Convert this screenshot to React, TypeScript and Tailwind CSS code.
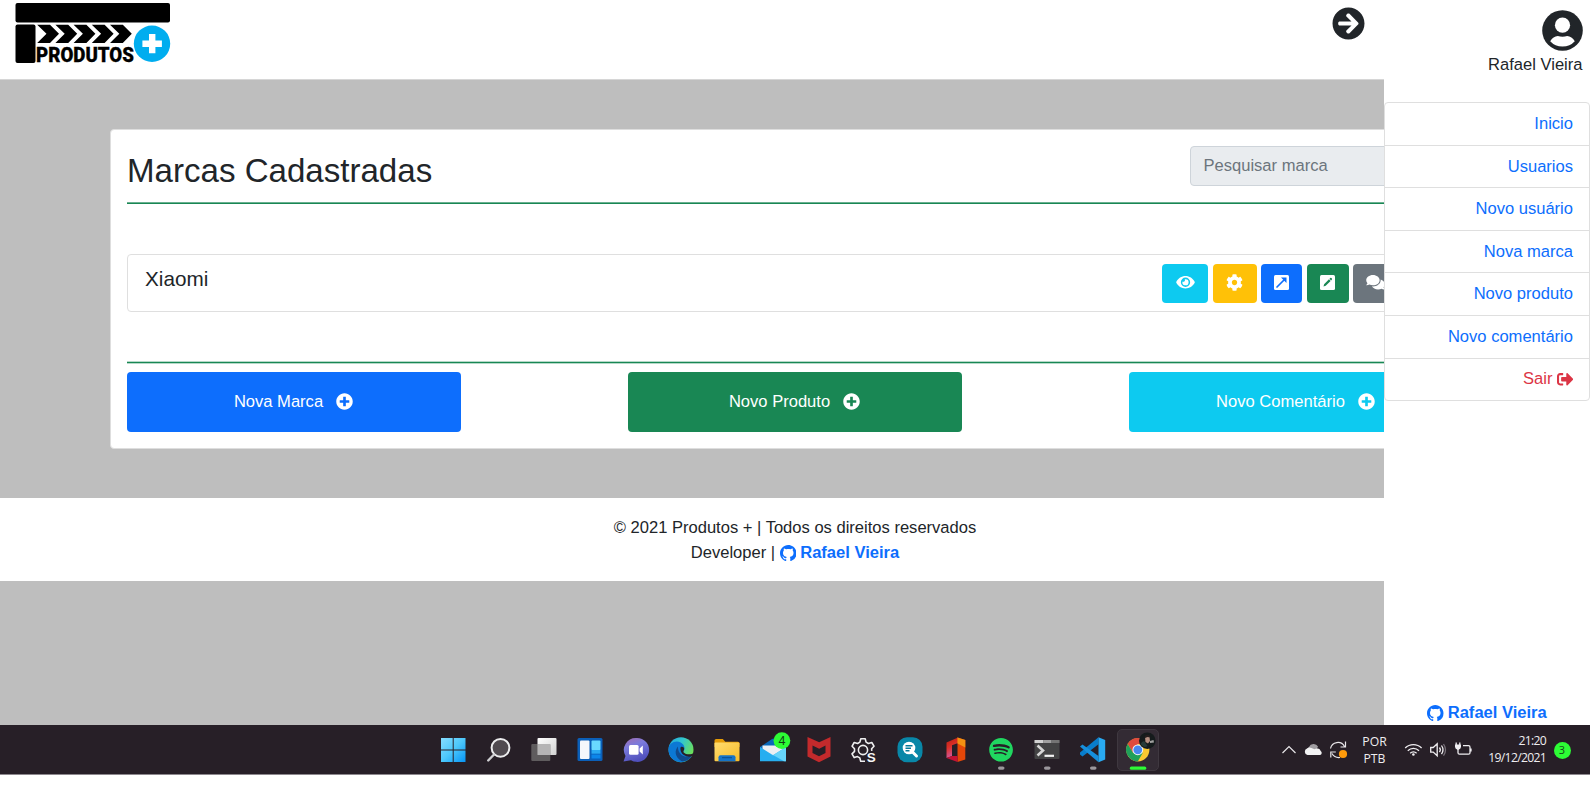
import type { ReactNode } from "react";
import { BsGithub } from "react-icons/bs";
import {
  FaArrowCircleRight,
  FaCog,
  FaComments,
  FaEye,
  FaPlusCircle,
  FaSignOutAlt,
  FaSpotify,
} from "react-icons/fa";

function Logo() {
  return (
    <svg className="ml-[15px] mt-[2px] h-[66px] w-[156px] overflow-visible" viewBox="15 2 156 66">
      <rect x="15.5" y="3" width="154.5" height="19.5" rx="2" />
      <rect x="15.5" y="24.5" width="20" height="38.5" rx="2" />
      {[0, 1, 2, 3, 4].map((i) => (
        <path
          key={i}
          transform={`translate(${i * 18.2} 0)`}
          d="M37.2 24.8H50L59 33.8L50 43H37.2L46.5 33.8Z"
        />
      ))}
      <text
        x="36"
        y="62.300"
        textLength="98"
        lengthAdjust="spacingAndGlyphs"
        fontFamily="Roboto, sans-serif"
        fontWeight="900"
        fontSize="21"
        stroke="#000"
        strokeWidth=".3"
      >
        PRODUTOS
      </text>
      <circle cx="152" cy="43.700" r="18.200" fill="#00adef" />
      <path d="M149 34h6.400v6.500h6.500v6.400h-6.500v6.300h-6.400v-6.300h-6.600v-6.400h6.600z" fill="#fff" />
    </svg>
  );
}

function OpenIcon() {
  return (
    <svg viewBox="0 0 15 15" className="size-[15px]">
      <rect width="15" height="15" rx="1.500" fill="#fff" />
      <path d="M3 12L11 4" stroke="#0d6efd" strokeWidth="1.700" strokeLinecap="round" />
      <path d="M7 2.500h5.500V8z" fill="#0d6efd" />
    </svg>
  );
}

function EditIcon() {
  return (
    <svg viewBox="0 0 15 15" className="size-[15px]">
      <rect width="15" height="15" rx="1.500" fill="#fff" />
      <path d="M3.500 11.500l.6-2.300 4.900-4.900 1.600 1.600-4.900 4.900zM9.500 3.800l.8-.8q.5-.4 1 0l.6.600q.4.500 0 1l-.8.800z" fill="#198754" />
    </svg>
  );
}

function Avatar() {
  return (
    <svg viewBox="0 0 41 41" className="size-[41px]">
      <circle cx="20.500" cy="20.500" r="20.300" fill="#212529" />
      <circle cx="20.500" cy="15.200" r="7.600" fill="#fff" />
      <path d="M8.200 31.300q3-5 7.600-5.300 4.700 1.300 9.400 0 4.600.3 7.600 5.300-4.800 5.300-12.300 5.300t-12.300-5.300z" fill="#fff" />
    </svg>
  );
}

const actions = [
  { icon: <FaEye className="h-[16.5px] w-[19px]" />, box: "w-[46px] bg-[#0dcaf0]" },
  { icon: <FaCog className="size-[17px]" />, box: "w-[44px] bg-[#ffc107]" },
  { icon: <OpenIcon />, box: "w-[41px] bg-[#0d6efd]" },
  { icon: <EditIcon />, box: "w-[42px] bg-[#198754]" },
  { icon: <FaComments className="h-[16.5px] w-[19px]" />, box: "w-[45px] bg-[#6c757d]" },
];

const shortcuts = [
  { label: "Nova Marca", color: "bg-[#0d6efd]" },
  { label: "Novo Produto", color: "bg-[#198754]" },
  { label: "Novo Comentário", color: "bg-[#0dcaf0]" },
];

const menu = ["Inicio", "Usuarios", "Novo usuário", "Nova marca", "Novo produto", "Novo comentário"];

function GithubLink() {
  return (
    <span className="inline-flex items-center font-bold text-[#0d6efd]">
      <BsGithub className="mb-px mr-[4px] size-[16.5px]" />
      Rafael Vieira
    </span>
  );
}

function BrandCard() {
  return (
    <section className="ml-[110px] mt-[49px] h-[320px] w-[1370px] rounded-[4px] border border-[#dedede] bg-white px-[16px] pt-[16px]">
      <div className="flex h-[56px] justify-between">
        <h1 className="mt-[5px] text-[33.1px] leading-[40px]">Marcas Cadastradas</h1>
        <div className="flex h-[40px] w-[273px] items-center rounded-[4px] border border-[#ced4da] bg-[#e9ecef] px-[12.5px] text-[#6c757d]">
          Pesquisar marca
        </div>
      </div>
      <div className="h-[2px] border-t border-[#6bb090] bg-[#198754]" />
      <div className="mt-[50px] flex h-[58px] justify-between rounded-[4px] border border-[#dfdfdf] px-[17px] pt-[8px]">
        <h2 className="mt-[3px] text-[20.7px] leading-[25px]">Xiaomi</h2>
        <div className="flex w-[283px] gap-[4.600px] pt-px">
          {actions.map((a, i) => (
            <span
              key={i}
              className={`flex h-[39px] shrink-0 items-center justify-center rounded-[4px] pb-[2px] text-white ${a.box}`}
            >
              {a.icon}
            </span>
          ))}
        </div>
      </div>
      <div className="mt-[49px] h-[3px] border-y border-[#b5d9c8] bg-[#198754]" />
      <div className="mt-[8px] flex justify-between">
        {shortcuts.map((s) => (
          <button
            key={s.label}
            className={`flex h-[60px] w-[334px] items-center justify-center gap-[13px] rounded-[4px] pr-px pt-px text-white ${s.color}`}
          >
            {s.label}
            <FaPlusCircle className="mb-[2px] size-[17px]" />
          </button>
        ))}
      </div>
    </section>
  );
}

function Sidebar() {
  return (
    <aside className="flex w-[206px] flex-col bg-white">
      <div className="flex h-[102px] flex-col items-end pr-[7.500px] pt-[9.500px]">
        <Avatar />
        <span className="mt-[2.500px]">Rafael Vieira</span>
      </div>
      <ul className="rounded-[4px] border border-[#dfdfdf] text-right">
        {menu.map((m) => (
          <li key={m} className="h-[42.6px] border-b border-[#dfdfdf] pr-[16px] leading-[41.6px] text-[#0d6efd]">
            {m}
          </li>
        ))}
        <li className="flex h-[41.600px] items-center justify-end gap-[4px] pr-[16px] text-[#dc3545]">
          Sair <FaSignOutAlt className="size-[16.5px]" />
        </li>
      </ul>
      <div className="mt-auto flex h-[23.500px] justify-center">
        <GithubLink />
      </div>
    </aside>
  );
}

function Dot() {
  return <rect x="20" y="41.5" width="6.500" height="3.200" rx="1.600" fill="#9b979c" />;
}

const apps: ReactNode[] = [
  <g fill="url(#win)">
    <path d="M11 13h11.700v11.600H11zM23.700 13h11.800v11.600H23.700zM11 25.500h11.700v11.600H11zM23.700 25.500h11.800v11.600H23.700z" />
  </g>,
  <g>
    <circle cx="24.500" cy="22.800" r="8.900" fill="#504a50" stroke="#ececee" strokeWidth="2" />
    <path d="M18 29.500l-5.800 6" stroke="#cfcfd2" strokeWidth="2.400" strokeLinecap="round" />
  </g>,
  <g>
    <rect x="16.500" y="13" width="19" height="17" rx="1" fill="url(#pane)" />
    <rect x="10.300" y="19" width="19" height="17" rx="1" fill="#666365" fillOpacity=".9" />
    <path d="M16.500 19h12.800v11H16.500z" fill="#b5b4b5" />
  </g>,
  <g>
    <rect x="10.500" y="13" width="25" height="23" rx="1.500" fill="#0b5fb8" />
    <rect x="13" y="15.500" width="9.500" height="18.500" rx="1" fill="#f4f7fb" />
    <rect x="24.500" y="15.500" width="9" height="9.800" rx="1" fill="#69d9ff" />
    <path d="M24.500 25h9v3.700h-9z" fill="#28a9f2" />
    <path d="M24.500 29.500h9v4h-9z" fill="#0b86ea" />
  </g>,
  <g>
    <path d="M23.500 12.900a12 12 0 1 1-5.500 22.300L10.500 36.500l2-5.600A12 12 0 0 1 23.500 12.900z" fill="url(#chat)" />
    <rect x="16" y="20" width="9.600" height="9.800" rx="1.500" fill="#fff" />
    <path d="M26.600 23.500l3.200-3v9l-3.200-3z" fill="#fff" />
  </g>,
  <g>
    <circle cx="23" cy="24.700" r="12.500" fill="url(#edge)" />
    <path d="M10.500 24c.4-6 7-9 12.200-6.500 3 1.500 4.500 4.600 3.500 7.500-.7 1.600-2.300 3 .8 4.300 3 1.200 6.500.4 7.800-.6-2 5-6.800 8.700-12.300 8.500-7-.3-12.300-6-12-13.200z" fill="#0c78d4" />
    <path d="M20 21.500c-3.500 3.500-3.500 10.500 3.300 14.500 4.500 1 8.700-1.500 11-6-4 2.500-9.500 2.200-12.200-1.500-1.800-2.400-2.200-4.800-2.100-7z" fill="#104a8e" />
    <path d="M22.400 23c.2-2 3.900-1.500 3.800.9-.1 1.700-1.500 2-.5 3.600 2 2 6 2.500 9.300 1l.8 0-1 2.500q-5 2-9-1-3.600-2.500-3.400-7z" fill="#271f27" />
  </g>,
  <g>
    <path d="M10.500 15.500q0-1.600 1.600-1.600h6.700l2.500 2.800h12.600q1.600 0 1.600 1.600V22h-25z" fill="#e59b06" />
    <rect x="10.500" y="17.500" width="25" height="18.700" rx="1" fill="url(#folder)" />
    <path d="M14.500 36.200v-4q0-2 2-2h13q2 0 2 2v4z" fill="#1674c7" />
    <path d="M18 32.700h10" stroke="#0a4d8e" strokeWidth="1" />
  </g>,
  <g>
    <path d="M10 22l12-8q1.500-1 3 0l11 8v4H10z" fill="#0968b9" />
    <path d="M12.500 20.500h21v12h-21z" fill="#eceff3" />
    <path d="M10 22l13 8.200L36 22v14.200H10z" fill="#27aef0" />
    <path d="M36 22v14.200H34L19 27.700 23 30.200z" fill="#67d4fa" />
    <circle cx="31.900" cy="15.600" r="8.400" fill="#2dfc35" />
    <text x="31.900" y="19.900" textAnchor="middle" fontSize="12" fill="#123b14" fontFamily="Noto Sans, sans-serif">4</text>
  </g>,
  <g>
    <path d="M11.500 12l11.700 5.300L34.500 12v19.500L23 37.200l-11.500-5.700z" fill="#c42a2c" />
    <path d="M16.500 20.500l6.700 3.200 6.300-3.200V28L23 31.300 16.500 28z" fill="#271f27" />
  </g>,
  <g fill="none" stroke="#eeeeef" strokeWidth="1.600" strokeLinejoin="round">
    <path d="M24 36.300h-4.300l-.9-3.400-2.300-1.300-3.300 1-2.200-3.700 2.500-2.500v-2.700l-2.400-2.500 2.100-3.700 3.400 1 2.300-1.400.9-3.400h4.400l.9 3.400 2.300 1.400 3.400-1 2.200 3.700-2.400 2.500.2 2.200" />
    <circle cx="22" cy="25" r="4.600" />
    <text x="25.700" y="36.800" stroke="none" fill="#f5f5f6" fontWeight="700" fontSize="13.500" fontFamily="Liberation Sans, sans-serif">S</text>
  </g>,
  <g>
    <rect x="10.500" y="12.200" width="25" height="25" rx="9.500" fill="#0987a8" />
    <circle cx="22" cy="23" r="6.300" fill="#fff" />
    <path d="M26 27.500l3.500 3.500" stroke="#fff" strokeWidth="3" strokeLinecap="round" />
    <path d="M18.500 20.700h7M18.500 23.200h5.500M18.500 25.700h4" stroke="#087a9a" strokeWidth="1.500" />
  </g>,
  <g>
    <path d="M13.500 17.500L25 12.500v5.500l-6 2.300v10.700L13.500 33z" fill="url(#office)" />
    <path d="M24.500 12.500l7.800 2.400v19.600l-7.800 2.600z" fill="#e44708" />
    <path d="M24.500 12.500l7.800 2.400v7.600l-7.800-4z" fill="#f39112" />
    <path d="M13.500 33L19 31h5.500v6z" fill="#c51235" />
  </g>,
  <g>
    <FaSpotify x="10.800" y="12.500" size="24.500" color="#20d760" />
    <Dot />
  </g>,
  <g>
    <rect x="10.500" y="15" width="25" height="19" rx="1" fill="#434344" />
    <path d="M10.500 15h9v3h-9z" fill="#d1d1d1" />
    <path d="M19.500 15h8v3h-8z" fill="#a0a0a0" />
    <path d="M27.500 15h8v3h-8z" fill="#747474" />
    <path d="M13.500 20.500l5.500 5-5.500 5" fill="none" stroke="#d6d6d6" strokeWidth="2.600" />
    <path d="M20.500 30.800h9.500" stroke="#f2f2f2" strokeWidth="2.200" />
    <Dot />
  </g>,
  <g>
    <path d="M28.500 12.300v7L12.500 31.500 10 29.500v-2z" fill="#087dcc" />
    <path d="M10 21.500l2.500-2 16 11.500v6.200z" fill="#168fdc" />
    <path d="M28.500 12.300l6.700 2.800v19.300l-6.700 2.800z" fill="#29aaf2" />
    <Dot />
  </g>,
  <g>
    <rect x="2.500" y="4.500" width="41" height="41" rx="4.500" fill="#332b34" stroke="#3f3840" />
    <circle cx="22.800" cy="24.800" r="11.600" fill="#fbc831" />
    <path d="M12.700 19a11.600 11.600 0 0 1 20.200 0H22.800l-5 8.700z" fill="#df4b3d" />
    <path d="M12.700 19a11.600 11.600 0 0 0 10.100 17.400l5-8.700-10-.1z" fill="#1fa05a" />
    <circle cx="22.800" cy="24.800" r="5.400" fill="#f5f5f5" />
    <circle cx="22.800" cy="24.800" r="4.400" fill="#4787ef" />
    <circle cx="32.300" cy="15.700" r="8.300" fill="#151b1c" />
    <path d="M25.500 19q2-3.500 4-2.500l3 4.500q-4 2.500-7-2z" fill="#263a38" />
    <path d="M30 12q2-2.500 4.500-.5l.5 4.500-2 2.500-2.500-1.500z" fill="#b58f82" />
    <path d="M29.500 12q1.500-3.500 5-1.500l1 2-3-.5-2.500 1z" fill="#251d1d" />
    <path d="M35 16l3.500-1 .5 2.500-4 .5z" fill="#a1a1a0" />
    <rect x="14.800" y="41.500" width="16.500" height="3.300" rx="1.600" fill="#2dfc35" />
  </g>,
];

function Taskbar() {
  return (
    <footer className="flex h-[50px] items-start border-b border-[#8d888e] bg-[#271f27] pl-[430px] font-['Open_Sans','Noto_Sans',sans-serif] text-[12.2px] leading-[16.5px] text-[#efeef0]">
      <svg className="absolute size-0">
        <defs>
          <linearGradient id="win" gradientUnits="userSpaceOnUse" x1="11" y1="13" x2="35" y2="37">
            <stop stopColor="#87ddff" />
            <stop offset=".5" stopColor="#4dc8fb" />
            <stop offset="1" stopColor="#0795f5" />
          </linearGradient>
          <linearGradient id="pane" x2="1" y2="1">
            <stop stopColor="#fff" />
            <stop offset="1" stopColor="#d2d2d2" />
          </linearGradient>
          <linearGradient id="chat" x2=".4" y2="1">
            <stop stopColor="#a56bad" />
            <stop offset=".4" stopColor="#7b7bdc" />
            <stop offset="1" stopColor="#5050bd" />
          </linearGradient>
          <linearGradient id="edge" x2="1" y2=".5">
            <stop stopColor="#20a7df" />
            <stop offset=".5" stopColor="#32c6cf" />
            <stop offset="1" stopColor="#6cdf5a" />
          </linearGradient>
          <linearGradient id="folder" x2="1" y2="1">
            <stop stopColor="#ffdc70" />
            <stop offset="1" stopColor="#f8bd28" />
          </linearGradient>
          <linearGradient id="office" x2=".3" y2="1">
            <stop stopColor="#b81d10" />
            <stop offset=".5" stopColor="#dc3029" />
            <stop offset="1" stopColor="#cf5aa0" />
          </linearGradient>
        </defs>
      </svg>
      <div className="grid w-[731px] shrink-0 grid-cols-16">
        {apps.map((app, i) => (
          <svg key={i} className="h-[49px] w-[46px] overflow-visible" viewBox="0 0 46 49">
            {app}
          </svg>
        ))}
      </div>
      <svg className="ml-[119px] h-[49px] w-[70px] shrink-0" viewBox="1280 725 70 49" fill="none" stroke="#e8e6e9" strokeWidth="1.200">
        <path d="M1282.500 753l6.500-6.500 6.500 6.500" />
        <path d="M1308 753a4.500 4.500 0 0 1 1-6 5 5 0 0 1 9-.5l-3 6z" fill="#a19ea2" stroke="none" />
        <path d="M1307.500 755a3.400 3.400 0 0 1-.5-6.500 4 4 0 0 1 4.500-.5l3 1.300a4 4 0 0 1 6.200 1.700 2.200 2.200 0 0 1-.7 4z" fill="#f2f2f3" stroke="none" />
        <path d="M1330.500 748.500a7.500 7.500 0 0 1 14-2M1345.500 741.500v5.500h-5M1330.800 757.500v-5.500h5M1332 753.500a8 8 0 0 0 8 4" />
        <circle cx="1343" cy="754" r="4.100" fill="#ff9b0b" stroke="none" />
      </svg>
      <div className="mt-[9px] w-[49px] shrink-0 text-center">
        <div>POR</div>
        <div>PTB</div>
      </div>
      <svg className="ml-[3px] h-[49px] w-[74px] shrink-0" viewBox="1402 725 74 49" fill="none" stroke="#f0eef1" strokeWidth="1.300">
        <path d="M1405.200 748a11.500 11.500 0 0 1 16.400 0M1407.800 750.800a7.800 7.800 0 0 1 11.200 0M1410.200 753.300a4.500 4.500 0 0 1 6.400 0" />
        <circle cx="1413.400" cy="754.500" r="1.300" fill="#f0eef1" stroke="none" />
        <path d="M1430.700 747.500h2.500l4-3.700v12l-4-3.700h-2.500zM1439.500 747.500q1.700 2.400 0 4.700M1441.500 745.500q3 4.400 0 8.700" />
        <path d="M1443.500 744q4 6 0 11.700" stroke="#777078" />
        <path d="M1463 745.700h5.500q1.500 0 1.500 1.500v5.500q0 1.500-1.500 1.500H1459.500q-1.500 0-1.500-1.500v-2M1471 748.500v3M1456.200 742.500v3M1459.800 742.500v3M1458 749v3" />
        <path d="M1455 744.500h6v2.500q0 2-3 3-3-1-3-3z" fill="#f0eef1" stroke="none" />
      </svg>
      <div className="mt-[8px] w-[70px] shrink-0 text-right tracking-[-0.7px]">
        <div>21:20</div>
        <div>19/12/2021</div>
      </div>
      <span className="ml-[7.500px] mt-[17px] flex size-[17px] shrink-0 items-center justify-center rounded-full bg-[#2dfc35] text-[11px] text-[#164619]">
        3
      </span>
    </footer>
  );
}

export default function App() {
  return (
    <div className="flex h-[790px] w-[1590px] flex-col overflow-hidden bg-white font-['Liberation_Sans',Arial,sans-serif] text-[16.56px] leading-[24.85px] text-[#212529]">
      <div className="flex h-[725px]">
        <main className="w-[1384px] overflow-hidden bg-[#bebebe]">
          <div className="flex w-[1590px] flex-col">
            <header className="flex h-[80px] border-b border-[#d6d6d6] bg-white">
              <Logo />
              <FaArrowCircleRight className="ml-[1161px] mt-[7px] size-[33px]" />
            </header>
            <BrandCard />
            <div className="mt-[49px] flex h-[83px] flex-col items-center bg-white pt-[18px]">
              <p>© 2021 Produtos + | Todos os direitos reservados</p>
              <p className="flex gap-[4.600px]">
                Developer | <GithubLink />
              </p>
            </div>
          </div>
        </main>
        <Sidebar />
      </div>
      <Taskbar />
    </div>
  );
}
